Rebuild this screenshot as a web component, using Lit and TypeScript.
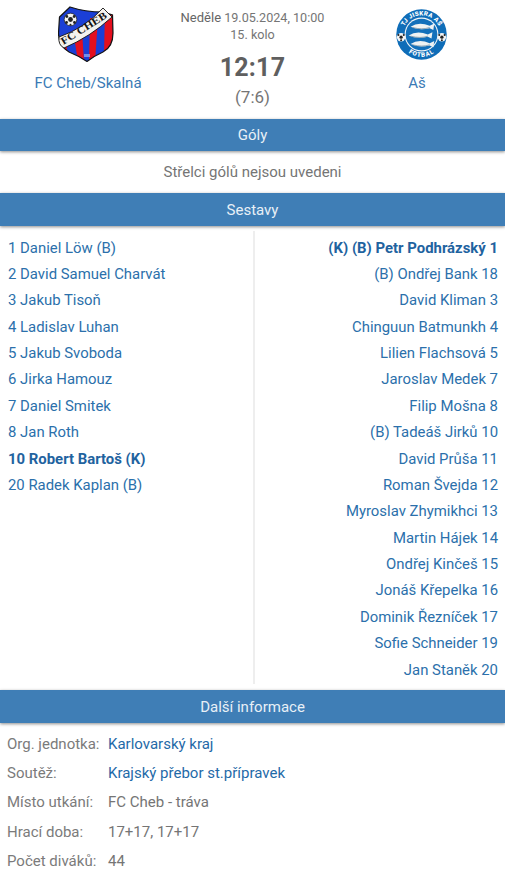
import { LitElement, html, css, svg } from "lit";
import { customElement } from "lit/decorators.js";

const home: [string, boolean?][] = [
  ["1 Daniel Löw (B)"], ["2 David Samuel Charvát"], ["3 Jakub Tisoň"], ["4 Ladislav Luhan"],
  ["5 Jakub Svoboda"], ["6 Jirka Hamouz"], ["7 Daniel Smitek"], ["8 Jan Roth"],
  ["10 Robert Bartoš (K)", true], ["20 Radek Kaplan (B)"],
];
const away: [string, boolean?][] = [
  ["(K) (B) Petr Podhrázský 1", true], ["(B) Ondřej Bank 18"], ["David Kliman 3"], ["Chinguun Batmunkh 4"],
  ["Lilien Flachsová 5"], ["Jaroslav Medek 7"], ["Filip Mošna 8"], ["(B) Tadeáš Jirků 10"],
  ["David Průša 11"], ["Roman Švejda 12"], ["Myroslav Zhymikhci 13"], ["Martin Hájek 14"],
  ["Ondřej Kinčeš 15"], ["Jonáš Křepelka 16"], ["Dominik Řezníček 17"], ["Sofie Schneider 19"], ["Jan Staněk 20"],
];
const info: [string, string, boolean][] = [
  ["Org. jednotka:", "Karlovarský kraj", true],
  ["Soutěž:", "Krajský přebor st.přípravek", true],
  ["Místo utkání:", "FC Cheb - tráva", false],
  ["Hrací doba:", "17+17, 17+17", false],
  ["Počet diváků:", "44", false],
];

const shield = "M59.5 17 L70 7 Q85 12 103 12 L112.5 15 L113 33 Q113 47 103 52 Q94 56 87 61.5 Q79 56 69 52 Q58.5 46 58.5 33 Z";

const chebLogo = svg`<svg class="logo" viewBox="58 6 60 56" width="60" height="56" aria-hidden="true">
  <defs><clipPath id="shc"><path d="${shield}"/></clipPath></defs>
  <path d="${shield}" fill="#1b3fd6"/>
  <g clip-path="url(#shc)">
    <path d="M58 38 H66 L68 62 H58 Z" fill="#e40f1e"/>
    <path d="M73 30 H82 L84 62 H78 Z" fill="#e40f1e"/>
    <path d="M90 18 H98 L95 62 H89 Z" fill="#e40f1e"/>
    <path d="M105 10 H114 V54 H104 Z" fill="#e40f1e"/>
  </g>
  <path d="${shield}" fill="none" stroke="#141414" stroke-width="1.2"/>
  <path d="M59 37 Q85 28 103 8 L112 17 Q90 37 64 48 Q58 45 59 37 Z" fill="#f5f3ee" stroke="#141414" stroke-width=".9"/>
  <text x="63.5" y="45" transform="rotate(-32 63.5 45)" font-family="Liberation Serif, serif" font-weight="700" font-size="10.5" fill="#141414" textLength="52" lengthAdjust="spacingAndGlyphs">FC CHEB</text>
  <circle cx="70.5" cy="19.5" r="6.3" fill="#f4f4f4" stroke="#141414" stroke-width=".7"/>
  <circle cx="70.5" cy="19.5" r="2.4" fill="#222"/>
  <circle cx="66.8" cy="16.5" r="1.4" fill="#222"/><circle cx="74.2" cy="16.5" r="1.4" fill="#222"/>
  <circle cx="66.5" cy="22.5" r="1.4" fill="#222"/><circle cx="74.5" cy="22.5" r="1.4" fill="#222"/><circle cx="70.5" cy="24.8" r="1" fill="#222"/>
  <rect x="84" y="54" width="6" height="3" fill="#8fa4e8" opacity=".8"/>
</svg>`;

const fish = (cx: number, cy: number) => svg`<path d="M${cx - 13} ${cy} Q${cx - 4} ${cy - 6} ${cx + 8} ${cy - 1} L${cx + 13} ${cy - 3.5} L${cx + 12} ${cy + 3.5} L${cx + 8} ${cy + 1.5} Q${cx - 4} ${cy + 4.5} ${cx - 13} ${cy}Z" fill="#eef2f3"/><path d="M${cx - 11} ${cy + .8} Q${cx} ${cy + 3.6} ${cx + 8} ${cy + .8}" stroke="#7f98a8" stroke-width=".9" fill="none"/>`;

const ball = (cx: number, cy: number) => svg`<circle cx="${cx}" cy="${cy}" r="4.6" fill="#f4f4f4"/><circle cx="${cx}" cy="${cy}" r="1.8" fill="#222"/><circle cx="${cx - 2.9}" cy="${cy - 2.4}" r="1.1" fill="#222"/><circle cx="${cx + 2.9}" cy="${cy - 2.4}" r="1.1" fill="#222"/><circle cx="${cx}" cy="${cy + 3.3}" r="1.1" fill="#222"/>`;

const asLogo = svg`<svg class="logo" viewBox="0 0 56 56" width="51" height="51" aria-hidden="true">
  <circle cx="28" cy="28" r="27.7" fill="#0f6db8"/>
  <circle cx="28" cy="28" r="18.6" fill="#f2f6f8"/>
  <circle cx="28" cy="28" r="17.4" fill="#1270bb"/>
  ${fish(29, 19.5)}${fish(27, 29)}${fish(29, 38.5)}
  ${ball(5.6, 31)}${ball(50.4, 31)}
  <path id="a1" d="M7 28 A21 21 0 0 1 49 28" fill="none"/>
  <path id="a2" d="M3.5 28 A24.5 24.5 0 0 0 52.5 28" fill="none"/>
  <text font-family="Roboto, sans-serif" font-weight="900" font-size="6.8" fill="#fff" letter-spacing=".3"><textPath href="#a1" startOffset="50%" text-anchor="middle">TJ JISKRA AŠ</textPath></text>
  <text font-family="Roboto, sans-serif" font-weight="900" font-size="6.8" fill="#fff" letter-spacing=".9"><textPath href="#a2" startOffset="50%" text-anchor="middle">FOTBAL</textPath></text>
</svg>`;

@customElement("app-root")
export class AppRoot extends LitElement {
  static styles = css`
    :host { display: block; width: 505px; height: 876px; overflow: hidden; background: #fff; font-family: Roboto, sans-serif; font-size: 15px; color: #757575; }
    .top { display: grid; grid-template-columns: 176px 1fr 176px; height: 118.5px; box-sizing: border-box; }
    .team { display: flex; flex-direction: column; align-items: center; padding-top: 6px; color: #3a7ab5; }
    .logo-wrap { height: 56px; display: flex; align-items: flex-start; justify-content: center; }
    .team.away .logo-wrap { padding: 3px 0 0 8px; box-sizing: border-box; }
    .team-name { margin-top: 13px; line-height: 17px; }
    .logo { display: block; }
    .mid { display: flex; flex-direction: column; align-items: center; padding-top: 9px; }
    .date { font-size: 12.6px; line-height: 17px; color: #757575; white-space: nowrap; }
    .day { color: #666; font-size: 13px; }
    .round { font-size: 12.6px; line-height: 17px; color: #757575; }
    .score { font-size: 25px; font-weight: 700; line-height: 30px; margin-top: 10px; color: #5f5f5f; letter-spacing: .2px; }
    .half { font-size: 17px; line-height: 20px; margin-top: 4px; color: #757575; }
    .bar { height: 32.5px; box-sizing: border-box; padding-top: 1px; background: #3f7eb6; color: #e8f0f6; display: flex; align-items: center; justify-content: center; box-shadow: 0 1px 3px rgba(0,0,0,.45); position: relative; }
    .note { height: 42px; display: flex; align-items: center; justify-content: center; color: #757575; }
    .lineups { display: grid; grid-template-columns: 253px 252px; height: 464.5px; box-sizing: border-box; padding: 5px 0 6px; font-size: 14.9px; }
    .col { padding: 4px 7px 0 8px; }
    .col.right { border-left: 2px solid #eeeeee; text-align: right; }
    .p { height: 26.375px; line-height: 26.375px; color: #2b70ab; white-space: nowrap; }
    .p.b { font-weight: 700; color: #1f639f; }
    .info { padding: 7px 7px 0; display: grid; grid-template-columns: 101px 1fr; grid-auto-rows: 29.2px; align-items: center; }
    .k { color: #7b7b7b; white-space: nowrap; }
    .v { color: #757575; }
    .v.link { color: #1f6aa8; }
  `;

  render() {
    return html`
      <div class="top">
        <div class="team">
          <div class="logo-wrap">${chebLogo}</div>
          <div class="team-name">FC Cheb/Skalná</div>
        </div>
        <div class="mid">
          <div class="date"><span class="day">Neděle</span> 19.05.2024, 10:00</div>
          <div class="round">15. kolo</div>
          <div class="score">12:17</div>
          <div class="half">(7:6)</div>
        </div>
        <div class="team away">
          <div class="logo-wrap">${asLogo}</div>
          <div class="team-name">Aš</div>
        </div>
      </div>
      <div class="bar">Góly</div>
      <div class="note">Střelci gólů nejsou uvedeni</div>
      <div class="bar">Sestavy</div>
      <div class="lineups">
        <div class="col">${home.map(([n, b]) => html`<div class="p ${b ? "b" : ""}">${n}</div>`)}</div>
        <div class="col right">${away.map(([n, b]) => html`<div class="p ${b ? "b" : ""}">${n}</div>`)}</div>
      </div>
      <div class="bar">Další informace</div>
      <div class="info">
        ${info.map(([k, v, l]) => html`<div class="k">${k}</div><div class="v ${l ? "link" : ""}">${v}</div>`)}
      </div>
    `;
  }
}
